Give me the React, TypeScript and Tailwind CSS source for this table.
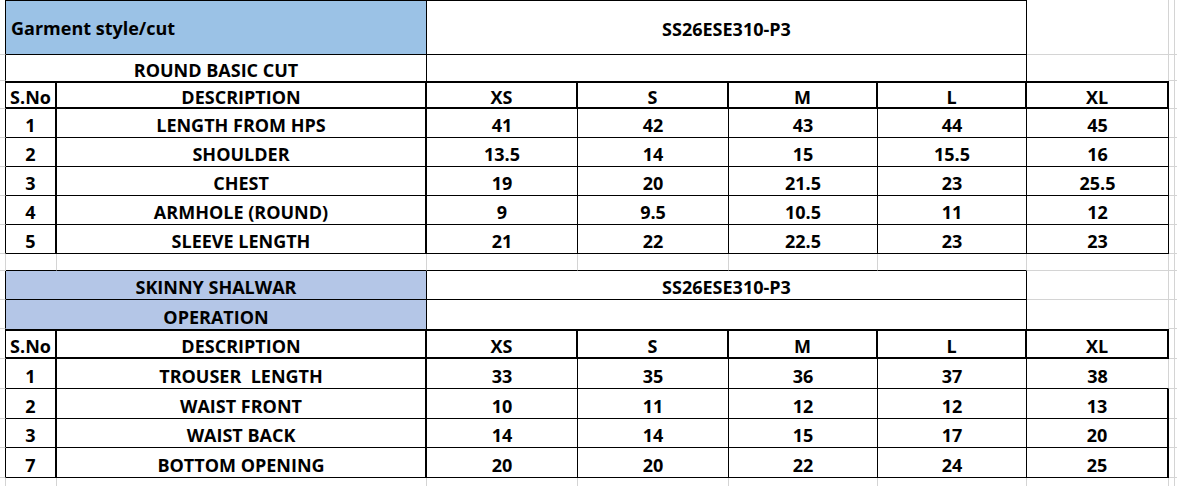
import React from "react";

const GR = "border-r border-r-[#d4d4d4]";
const GB = "border-b border-b-[#d4d4d4]";
const EDGE = "border-r border-r-black " + GB;

type CellProps = {
  span?: string;
  cls?: string;
  left?: boolean;
  children?: React.ReactNode;
};

const Cell = ({ span = "", cls = "pt-[4px]", left = false, children }: CellProps) => {
  return (
    <div
      className={`${span} ${cls} flex items-center overflow-hidden whitespace-pre ${
        left ? "justify-start pl-[5px]" : "justify-center"
      }`}
    >
      {children}
    </div>
  );
};

const Tail = () => (
  <>
    <Cell cls={`${GR} ${GB}`} />
    <Cell cls={GB} />
  </>
);

const Header = () => {
  const th = "pt-[4px] border-t-2 border-r-2 border-b-2 border-black";
  return (
    <>
      <Cell cls={EDGE} />
      <Cell cls={th}>S.No</Cell>
      <Cell cls={th}>DESCRIPTION</Cell>
      <Cell cls={th}>XS</Cell>
      <Cell cls={th}>S</Cell>
      <Cell cls={th}>M</Cell>
      <Cell cls={th}>L</Cell>
      <Cell cls={th}>XL</Cell>
      <Tail />
    </>
  );
};

type Row = { no: string; desc: string; v: string[]; x: string; xl: string };

const thin = "pt-[4px] border-r border-b border-black";
const thick = "pt-[4px] border-r-2 border-b border-black";
const gray = "pt-[4px] border-r border-r-[#d4d4d4] border-b border-b-black";

const top: Row[] = [
  { no: "1", desc: "LENGTH FROM HPS", v: ["41", "42", "43", "44"], x: "45", xl: thin },
  { no: "2", desc: "SHOULDER", v: ["13.5", "14", "15", "15.5"], x: "16", xl: thin },
  { no: "3", desc: "CHEST", v: ["19", "20", "21.5", "23"], x: "25.5", xl: thin },
  { no: "4", desc: "ARMHOLE (ROUND)", v: ["9", "9.5", "10.5", "11"], x: "12", xl: thin },
  { no: "5", desc: "SLEEVE LENGTH", v: ["21", "22", "22.5", "23"], x: "23", xl: thin },
];

const bottom: Row[] = [
  { no: "1", desc: "TROUSER  LENGTH", v: ["33", "35", "36", "37"], x: "38", xl: gray },
  { no: "2", desc: "WAIST FRONT", v: ["10", "11", "12", "12"], x: "13", xl: thick },
  { no: "3", desc: "WAIST BACK", v: ["14", "14", "15", "17"], x: "20", xl: thick },
  { no: "7", desc: "BOTTOM OPENING", v: ["20", "20", "22", "24"], x: "25", xl: thick },
];

const Rows = ({ rows }: { rows: Row[] }) => (
  <>
    {rows.map((r, i) => (
      <React.Fragment key={i}>
        <Cell cls={EDGE} />
        <Cell cls="pt-[4px] border-r-2 border-b border-black">{r.no}</Cell>
        <Cell cls="pt-[4px] border-r-2 border-b border-black">{r.desc}</Cell>
        {r.v.map((val, j) => (
          <Cell key={j} cls={thin}>
            {val}
          </Cell>
        ))}
        <Cell cls={r.xl}>{r.x}</Cell>
        <Tail />
      </React.Fragment>
    ))}
  </>
);

export default function App() {
  return (
    <div className="w-[1177px] h-[486px] bg-white overflow-hidden text-black font-['Open_Sans','Liberation_Sans',sans-serif] font-bold text-[18px] leading-none">
      <div className="grid grid-cols-[6px_51px_370px_151px_151px_149px_149px_142px_6px_1fr] grid-rows-[55px_26px_28px_29px_29px_29px_29px_29px_17px_29px_29px_30px_30px_30px_29px_30px_8px]">
        {/* style header */}
        <Cell cls={EDGE} />
        <Cell span="col-span-2" left cls="bg-[#9bc2e6] border-t border-r border-b border-black">
          Garment style/cut
        </Cell>
        <Cell span="col-span-4" cls="pt-[2px] border-t border-r border-b border-black">
          SS26ESE310-P3
        </Cell>
        <Cell cls={`${GR} ${GB}`} />
        <Tail />

        <Cell cls={EDGE} />
        <Cell span="col-span-2" cls="pt-[4px] border-r border-r-black">
          ROUND BASIC CUT
        </Cell>
        <Cell span="col-span-4" cls="border-r border-r-black" />
        <Cell cls={GR} />
        <Tail />

        <Header />
        <Rows rows={top} />

        {/* spacer row */}
        <Cell cls={`${GR} ${GB}`} />
        {[0, 1, 2, 3, 4, 5].map((i) => (
          <Cell key={i} cls={`${GR} border-b border-b-black`} />
        ))}
        <Cell cls={`${GR} ${GB}`} />
        <Tail />

        {/* shalwar */}
        <Cell cls={EDGE} />
        <Cell span="col-span-2" cls="pt-[4px] bg-[#b4c6e7] border-r border-b border-black">
          SKINNY SHALWAR
        </Cell>
        <Cell span="col-span-4" cls="pt-[4px] border-r border-b border-black">
          SS26ESE310-P3
        </Cell>
        <Cell cls={`${GR} ${GB}`} />
        <Tail />

        <Cell cls={EDGE} />
        <Cell span="col-span-2" cls="pt-[4px] bg-[#b4c6e7] border-r border-r-black">
          OPERATION
        </Cell>
        <Cell span="col-span-4" cls="border-r border-r-black" />
        <Cell cls={GR} />
        <Tail />

        <Header />
        <Rows rows={bottom} />

        {/* bottom gridlines */}
        {[0, 1, 2, 3, 4, 5, 6, 7, 8].map((i) => (
          <Cell key={i} cls={GR} />
        ))}
        <Cell />
      </div>
    </div>
  );
}
